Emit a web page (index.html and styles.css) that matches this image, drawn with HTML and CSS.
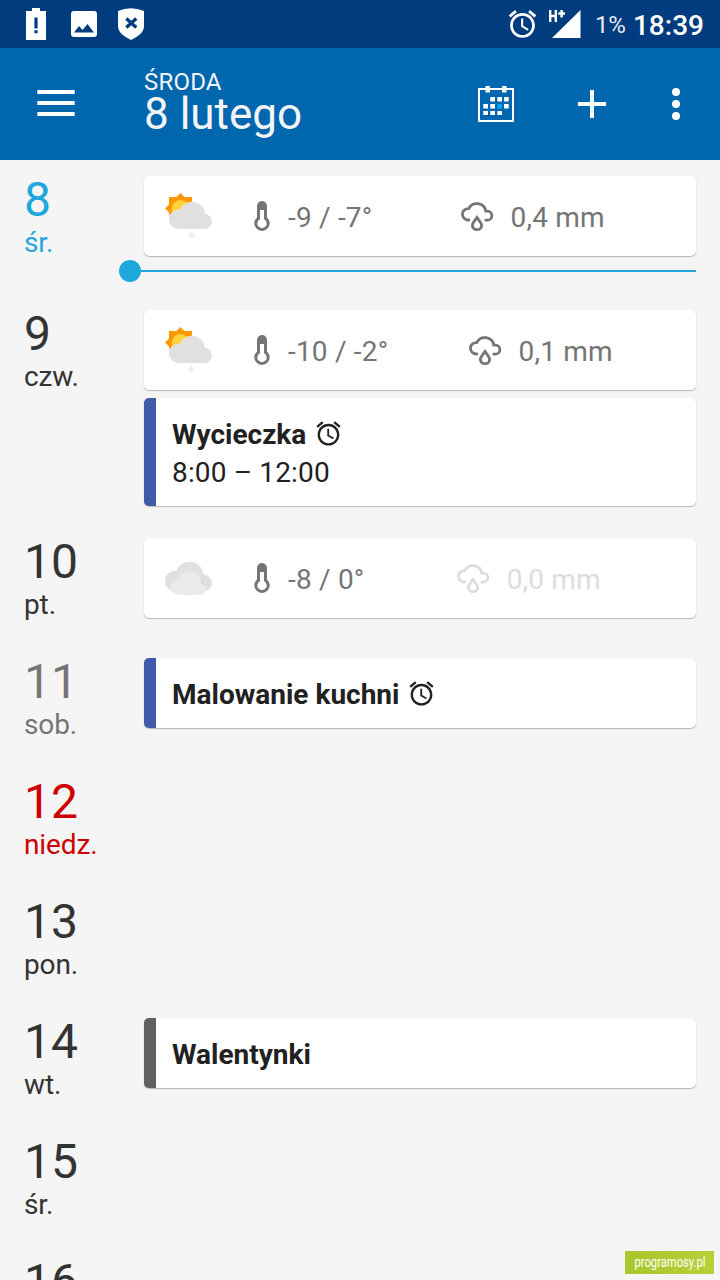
FILE: index.html
```html
<!DOCTYPE html>
<html lang="pl">
<head>
<meta charset="utf-8">
<title>Kalendarz</title>
<link rel="stylesheet" href="styles.css">
</head>
<body>
<svg class="defs" width="0" height="0">
  <symbol id="alarm" viewBox="0 0 24 24">
    <path d="M22 5.72l-4.6-3.86-1.29 1.53 4.6 3.86L22 5.72zM7.88 3.39L6.6 1.86 2 5.71l1.29 1.53 4.59-3.85zM12.5 8H11v6l4.75 2.85.75-1.23-4-2.37V8zM12 4c-4.97 0-9 4.03-9 9s4.02 9 9 9c4.97 0 9-4.03 9-9s-4.03-9-9-9zm0 16c-3.87 0-7-3.13-7-7s3.13-7 7-7 7 3.13 7 7-3.13 7-7 7z" fill="currentColor"/>
  </symbol>
  <symbol id="thermo" viewBox="0 0 16 32">
    <path d="M3 6a5 5 0 0 1 10 0V17.4a7.7 7.7 0 1 1-10 0Z" fill="currentColor"/>
    <path d="M6 10H10V19.2a4.7 4.7 0 1 1-4 0Z" fill="#fff"/>
  </symbol>
  <symbol id="rain" viewBox="0 0 36 32">
    <g fill="none" stroke="currentColor" stroke-width="2.8" stroke-linecap="round">
      <path d="M9.8 20H8.6A5.7 5.7 0 0 1 9.7 8.6A9.1 9.1 0 0 1 26.8 11.2H28.4A4.5 4.5 0 0 1 28.4 20.2H26.8"/>
      <path d="M18 17.6C16.5 20 13.4 22.6 13.4 25.4A4.6 4.3 0 0 0 22.6 25.4C22.6 22.6 19.5 20 18 17.6Z"/>
    </g>
  </symbol>
  <symbol id="sun-cloud" viewBox="0 0 48 48">
    <path d="M5 5H28V20L5 26Z" fill="#ff9800"/>
    <path d="M16.4 1L32 16.5L16.4 32L1 16.5Z" fill="#ff9800"/>
    <path d="M5 22.5H9V30H5Z" fill="#ffe0bd"/>
    <circle cx="16.5" cy="16.7" r="8.8" fill="#ffd23c"/>
    <g fill="#e0e0e0">
      <circle cx="14.8" cy="27.2" r="9.8"/>
      <circle cx="28" cy="22.7" r="13"/>
      <circle cx="40.2" cy="29.4" r="7.6"/>
      <path d="M14.8 22H40.2V37H14.8Z"/>
    </g>
    <path d="M27.5 39Q28.5 42.3 31.8 43.2Q28.5 44.2 27.5 47.4Q26.5 44.2 23.2 43.2Q26.5 42.3 27.5 39Z" fill="#eee"/>
  </symbol>
  <symbol id="clouds" viewBox="0 0 48 48">
    <g fill="#e0e0e0">
      <circle cx="11" cy="27" r="10.2"/>
      <circle cx="25.5" cy="22" r="14.2"/>
      <circle cx="39.4" cy="29" r="8.4"/>
    </g>
    <path d="M35.5 25.5L41 31 38 31.5Z" fill="#c4c4c4"/>
    <g fill="#eaeaea">
      <circle cx="14" cy="33" r="7.7"/>
      <circle cx="25.3" cy="29.5" r="12"/>
      <circle cx="36" cy="34.7" r="6"/>
      <path d="M14 30H36V40.7H14Z"/>
    </g>
  </symbol>
</svg>
<div class="screen">
  <header class="status">
    <div class="notices">
      <svg width="20" height="32" viewBox="0 0 20 32"><path fill="#fff" fill-rule="evenodd" d="M6 0H14V3H20V32H0V3H6ZM8.4 9.5V20.5H11.6V9.5ZM8.4 22.3V25.3H11.6V22.3Z"/></svg>
      <svg width="26" height="26" viewBox="0 0 26 26"><rect width="26" height="26" rx="3" fill="#fff"/><path d="M3 21.5L8 15 11.5 19 16.5 13 23 21.5Z" fill="#003c7e"/></svg>
      <svg width="28" height="32" viewBox="0 0 28 32"><path d="M1 3Q14-2.5 27 3V18C27 25 20 29 14 32C8 29 1 25 1 18Z" fill="#fff"/><path d="M9.3 10.6L19.3 19.6M19.3 10.6L9.3 19.6" stroke="#003c7e" stroke-width="3.3"/></svg>
    </div>
    <div class="system">
      <svg class="status-alarm" width="33" height="34"><use href="#alarm"/></svg>
      <svg class="signal" width="32" height="30" viewBox="0 0 32 30"><path d="M31.5 1V29H3Z" fill="#fff"/><path d="M1.2 1V13M6.8 1V13M1 7H7M9.3 4.5H16M12.6 1V8.5" stroke="#fff" stroke-width="2.4" fill="none"/></svg>
      <span class="battery">1%</span>
      <span class="clock">18:39</span>
    </div>
  </header>
  <nav class="toolbar">
    <svg class="menu" width="38" height="28" viewBox="0 0 38 28"><path d="M.3 3H37.7M.3 14H37.7M.3 25H37.7" stroke="#fff" stroke-width="4"/></svg>
    <div class="heading">
      <div class="weekday">ŚRODA</div>
      <div class="date">8 lutego</div>
    </div>
    <div class="actions">
      <svg width="36" height="36" viewBox="0 0 36 36">
        <path d="M1 3H35V35H1Z" fill="none" stroke="#fff" stroke-width="2"/>
        <path d="M7.5 0H12V6.5H7.5ZM24 0H28.5V6.5H24Z" fill="#fff"/>
        <path d="M12.3 11H17V15.5H12.3ZM19.3 11H24V15.5H19.3ZM26 11H30.7V15.5H26ZM5.3 18H10V22.6H5.3ZM12.3 18H17V22.6H12.3ZM26 18H30.7V22.6H26ZM5.3 25H10V29H5.3ZM12.3 25H17V29H12.3ZM19.3 25H24V29H19.3Z" fill="#fff"/>
        <path d="M19.3 18H24V22.6H19.3Z" fill="#00a8ff"/>
      </svg>
      <svg width="28" height="28" viewBox="0 0 28 28"><path d="M14 0V28M0 14H28" stroke="#fff" stroke-width="4"/></svg>
      <svg width="8" height="32" viewBox="0 0 8 32" fill="#fff"><circle cx="4" cy="4" r="4"/><circle cx="4" cy="16" r="4"/><circle cx="4" cy="28" r="4"/></svg>
    </div>
  </nav>
  <main class="agenda">
    <section class="day today">
      <div class="label"><div class="num">8</div><div class="name">śr.</div></div>
      <div class="items">
        <div class="card weather">
          <svg class="sky"><use href="#sun-cloud"/></svg>
          <svg class="thermo"><use href="#thermo"/></svg>
          <span>-9 / -7°</span>
          <div class="precip"><svg class="rain"><use href="#rain"/></svg><span>0,4 mm</span></div>
        </div>
        <div class="now"><i class="now-dot"></i><i class="now-line"></i></div>
      </div>
    </section>
    <section class="day">
      <div class="label"><div class="num">9</div><div class="name">czw.</div></div>
      <div class="items">
        <div class="card weather">
          <svg class="sky"><use href="#sun-cloud"/></svg>
          <svg class="thermo"><use href="#thermo"/></svg>
          <span>-10 / -2°</span>
          <div class="precip"><svg class="rain"><use href="#rain"/></svg><span>0,1 mm</span></div>
        </div>
        <div class="card event">
          <div class="title">Wycieczka<svg class="alarm"><use href="#alarm"/></svg></div>
          <div class="time">8:00 – 12:00</div>
        </div>
      </div>
    </section>
    <section class="day">
      <div class="label"><div class="num">10</div><div class="name">pt.</div></div>
      <div class="items">
        <div class="card weather">
          <svg class="sky"><use href="#clouds"/></svg>
          <svg class="thermo"><use href="#thermo"/></svg>
          <span>-8 / 0°</span>
          <div class="precip none"><svg class="rain"><use href="#rain"/></svg><span>0,0 mm</span></div>
        </div>
      </div>
    </section>
    <section class="day saturday">
      <div class="label"><div class="num">11</div><div class="name">sob.</div></div>
      <div class="items">
        <div class="card event">
          <div class="title">Malowanie kuchni<svg class="alarm"><use href="#alarm"/></svg></div>
        </div>
      </div>
    </section>
    <section class="day sunday">
      <div class="label"><div class="num">12</div><div class="name">niedz.</div></div>
    </section>
    <section class="day">
      <div class="label"><div class="num">13</div><div class="name">pon.</div></div>
    </section>
    <section class="day">
      <div class="label"><div class="num">14</div><div class="name">wt.</div></div>
      <div class="items">
        <div class="card event gray"><div class="title">Walentynki</div></div>
      </div>
    </section>
    <section class="day">
      <div class="label"><div class="num">15</div><div class="name">śr.</div></div>
    </section>
    <section class="day">
      <div class="label"><div class="num">16</div></div>
    </section>
  </main>
  <div class="watermark">
    <svg width="89" height="23"><text x="9.5" y="15.5" textLength="71" lengthAdjust="spacingAndGlyphs">programosy.pl</text></svg>
  </div>
</div>
</body>
</html>
```
FILE: styles.css
```css
* { box-sizing: border-box; }
body { margin: 0; font-family: Roboto, sans-serif; color: #212121; }
svg { display: block; flex: none; }
.defs { position: absolute; }
.screen { position: relative; width: 720px; height: 1280px; overflow: hidden; background: #f5f5f5; }

.status { display: flex; justify-content: space-between; height: 48px; padding: 0 16px 0 26px; background: #003c7e; color: #fff; }
.notices { display: flex; align-items: center; gap: 25px; }
.notices svg:nth-child(3) { margin-left: -5px; }
.system { display: flex; align-items: center; }
.signal { margin: 0 14px 0 10px; }
.battery { font-size: 24px; font-weight: 400; opacity: .9; margin-right: 7px; padding-top: 2px; }
.clock { font-size: 28px; font-weight: 500; padding-top: 2px; }

.toolbar { display: flex; height: 112px; padding: 0 40px 0 37px; background: #0066ae; color: #f2f4f6; }
.menu { margin-top: 41px; }
.heading { margin-left: 69px; padding-top: 21px; }
.weekday { font-size: 24px; line-height: 26px; letter-spacing: .2px; }
.date { font-size: 44px; line-height: 40px; margin-top: -1px; }
.actions { display: flex; align-items: center; gap: 64px; margin-left: auto; }
.actions svg:last-child { margin-left: 2px; }

.agenda { padding: 16px 24px 0; }
.day { display: flex; min-height: 88px; margin-bottom: 32px; color: #333; }
.label { width: 120px; flex: none; height: 88px; }
.num { font-size: 48px; line-height: 56px; margin: -4px 0 -1px; }
.name { font-size: 28px; line-height: 32px; letter-spacing: -.1px; }
.today { color: #1fa8dc; }
.saturday { color: #757575; }
.sunday { color: #c00; }
.items { flex: 1; }
.card { border-radius: 5px; background: #fff; box-shadow: 0 1px 1px rgba(0,0,0,.24), 0 0 1px rgba(0,0,0,.12); }
.weather { display: flex; align-items: center; height: 80px; padding-left: 20px; color: #757575; font-size: 28px; line-height: 38px; letter-spacing: .2px; }
.weather span { padding-top: 4px; }
.weather + .event { margin-top: 8px; }
.sky { width: 48px; height: 48px; }
.thermo { width: 16px; height: 32px; margin: 0 18px 0 42px; }
.precip { flex: 1; display: flex; align-items: center; justify-content: center; gap: 16px; padding-right: 5px; }
.rain { width: 36px; height: 32px; }
.none { color: #ddd; }
.now { display: flex; align-items: center; height: 22px; margin: 4px 0 -4px -25px; }
.now-dot { width: 22px; height: 22px; border-radius: 50%; background: #1fa8dc; }
.now-line { flex: 1; height: 2px; background: #1fa8dc; }
.event { padding: 18px 16px 14px; border-left: 12px solid #3f5ba9; color: #212121; font-size: 28px; line-height: 38px; }
.gray { border-left-color: #616161; }
.title { display: flex; align-items: center; font-weight: 700; }
.time { letter-spacing: .15px; }
.alarm { width: 29px; height: 29px; margin: -4px 0 0 8px; }

.watermark { position: absolute; right: 6px; bottom: 6px; width: 89px; height: 23px; background: linear-gradient(90deg, #a9c62c, #b8d038); }
.watermark text { font-size: 14px; font-weight: 400; fill: #fff; }
```
